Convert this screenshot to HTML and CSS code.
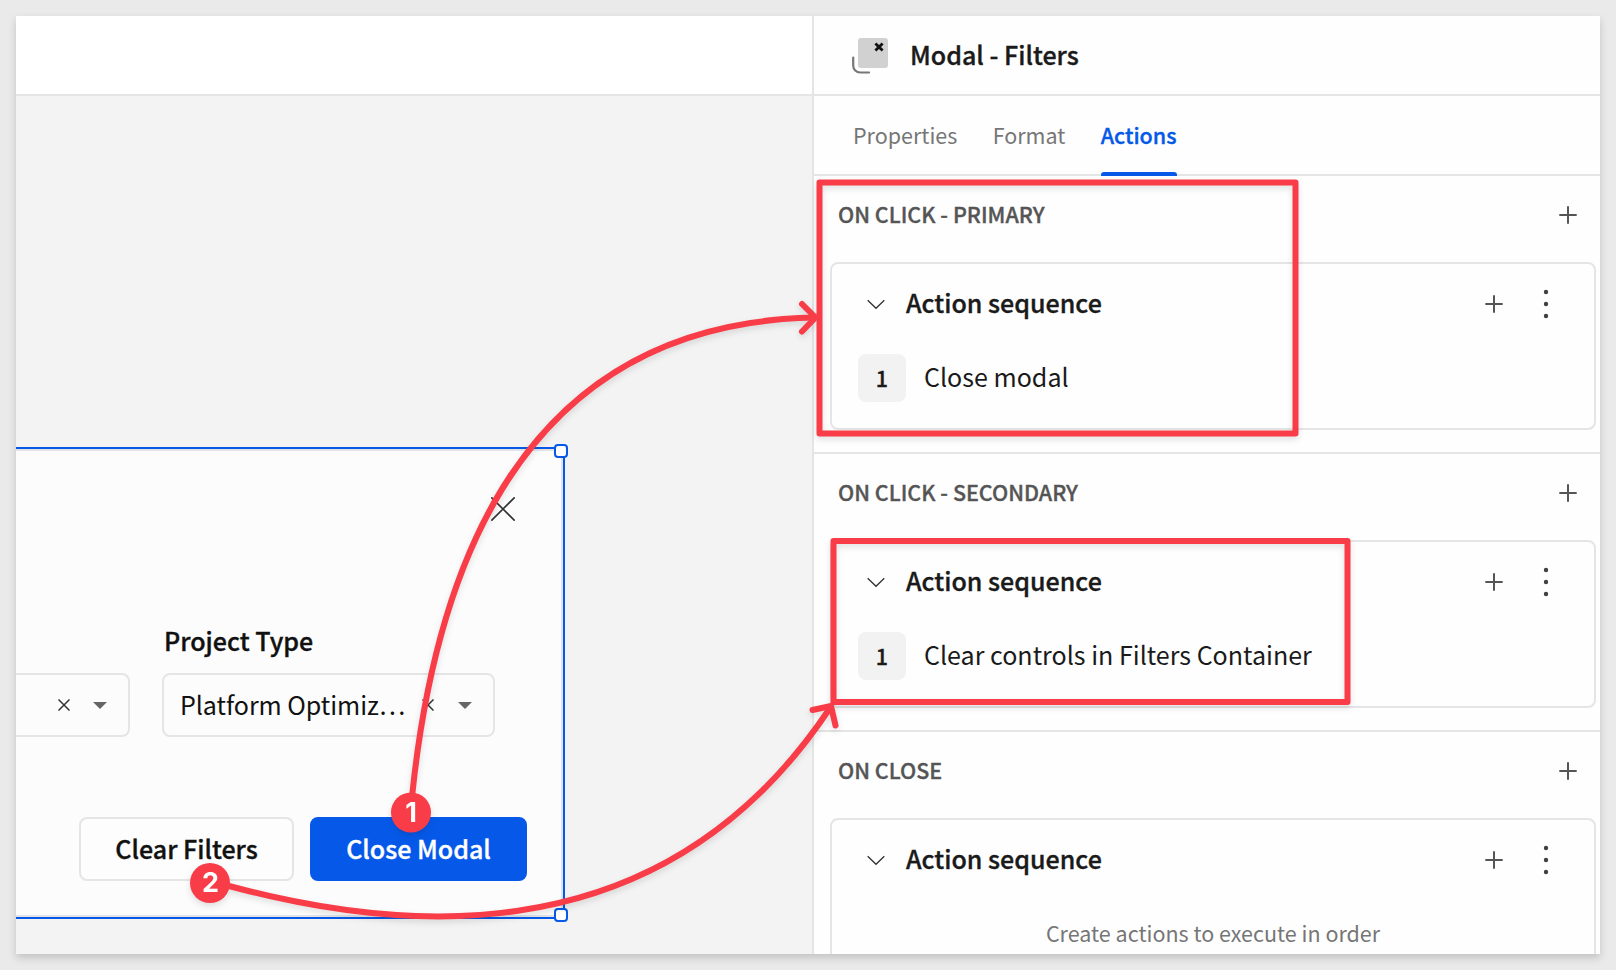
FILE: index.html
```html
<!DOCTYPE html>
<html lang="en">
<head>
<meta charset="utf-8">
<title>Modal - Filters</title>
<link rel="stylesheet" href="styles.css">
</head>
<body>
<svg class="sprite" width="0" height="0">
  <symbol id="plus" viewBox="0 0 18 18"><path d="M9 .3v17.4M.3 9h17.4" stroke="#555" stroke-width="2" fill="none"/></symbol>
  <symbol id="chevron" viewBox="0 0 18 12"><path d="M.7 2.200 9 10.300l8.300-8.100" stroke="#333" stroke-width="1.3" fill="none"/></symbol>
  <symbol id="dots" viewBox="0 0 6 30"><g fill="#404040"><circle cx="3" cy="3" r="2.2"/><circle cx="3" cy="15" r="2.2"/><circle cx="3" cy="27" r="2.2"/></g></symbol>
  <symbol id="clear" viewBox="0 0 12 12"><path d="M.5.5l11 11M11.5.5l-11 11" stroke="#333" stroke-width="1.5" fill="none"/></symbol>
  <symbol id="caret" viewBox="0 0 14 7"><path d="M0 0h14L7 7z" fill="#666"/></symbol>
</svg>
<div class="window">
  <main class="stage">
    <div class="topbar"></div>
    <div class="canvas">
      <section class="modal">
        <div class="modal-head"><svg class="close" viewBox="0 0 24 24"><path d="M.3.3l23.4 23.4M23.7.3.3 23.7" stroke="#333" stroke-width="1.6" fill="none"/></svg></div>
        <div class="fields">
          <div class="select select-cut"><svg class="i-clear"><use href="#clear"/></svg><svg class="i-caret"><use href="#caret"/></svg></div>
          <div class="field">
            <div class="label"><span>Project Type</span></div>
            <div class="select"><span class="value">Platform Optimiz…</span><svg class="i-clear"><use href="#clear"/></svg><svg class="i-caret"><use href="#caret"/></svg></div>
          </div>
        </div>
        <div class="buttons">
          <button class="btn btn-clear">Clear Filters</button>
          <button class="btn btn-primary">Close Modal</button>
        </div>
        <i class="handle handle-top"></i>
        <i class="handle handle-bottom"></i>
      </section>
    </div>
  </main>
  <aside class="panel">
    <header class="panel-head">
      <svg class="modal-icon" viewBox="0 0 36 36"><rect x="6" y="0" width="30" height="30" rx="3" fill="#d1d1d1"/><path d="M23.400 5.400l7.200 7.200M30.600 5.400l-7.200 7.200" stroke="#111" stroke-width="2.8"/><path d="M1.200 19.500v8a7 7 0 0 0 7 7H17" stroke="#777" stroke-width="2.200" stroke-linecap="round" fill="none"/></svg>
      <h1 class="title">Modal - Filters</h1>
    </header>
    <nav class="tabs">
      <span class="tab">Properties</span>
      <span class="tab">Format</span>
      <span class="tab tab-active">Actions</span>
    </nav>
    <section class="group">
      <div class="group-head"><span>ON CLICK - PRIMARY</span><svg class="i-plus"><use href="#plus"/></svg></div>
      <div class="card">
        <div class="card-head"><svg class="i-chevron"><use href="#chevron"/></svg><h2>Action sequence</h2><svg class="i-plus"><use href="#plus"/></svg><svg class="i-dots"><use href="#dots"/></svg></div>
        <div class="step"><b class="num">1</b><span>Close modal</span></div>
      </div>
    </section>
    <section class="group">
      <div class="group-head"><span>ON CLICK - SECONDARY</span><svg class="i-plus"><use href="#plus"/></svg></div>
      <div class="card">
        <div class="card-head"><svg class="i-chevron"><use href="#chevron"/></svg><h2>Action sequence</h2><svg class="i-plus"><use href="#plus"/></svg><svg class="i-dots"><use href="#dots"/></svg></div>
        <div class="step"><b class="num">1</b><span>Clear controls in Filters Container</span></div>
      </div>
    </section>
    <section class="group">
      <div class="group-head"><span>ON CLOSE</span><svg class="i-plus"><use href="#plus"/></svg></div>
      <div class="card">
        <div class="card-head"><svg class="i-chevron"><use href="#chevron"/></svg><h2>Action sequence</h2><svg class="i-plus"><use href="#plus"/></svg><svg class="i-dots"><use href="#dots"/></svg></div>
        <div class="empty">Create actions to execute in order</div>
      </div>
    </section>
  </aside>
</div>
<svg class="notes" viewBox="0 0 1616 970">
  <g class="lines">
    <rect x="819.5" y="182.500" width="476" height="251"/>
    <rect x="833.5" y="541" width="514" height="161"/>
    <path d="M412 797Q460 324 815 317.500"/>
    <path d="M802 304l13.500 13.500L802 331.500" stroke-linecap="round"/>
    <path d="M229 886Q638 996 830 708"/>
    <path d="M812.500 710l18.500-4 4.500 19.500" stroke-linecap="round"/>
  </g>
  <g class="pins">
    <circle cx="411" cy="812.500" r="20"/><text x="411" y="822">1</text>
    <circle cx="210" cy="883" r="20"/><text x="210.500" y="892">2</text>
  </g>
</svg>
</body>
</html>
```
FILE: styles.css
```css
* { box-sizing: border-box; }
body {
  margin: 0;
  width: 1616px;
  height: 970px;
  padding: 16px;
  overflow: hidden;
  background: #eaeaea;
  color: #1a1a1a;
  font-family: "Noto Sans CJK SC", "Noto Sans", sans-serif;
  font-size: 25.05px;
  line-height: 36px;
}
svg { display: block; flex: none; }
.sprite { position: absolute; }
h1, h2 { margin: 0; font-size: inherit; font-weight: 500; }
span, h1, h2 { white-space: nowrap; }
h1, h2, .label, .btn, .tab-active, .group-head span, .num { -webkit-text-stroke: .35px currentColor; }

.window {
  display: flex;
  height: 938px;
  overflow: hidden;
  background: #fefefe;
  box-shadow: 0 4px 8px rgba(0, 0, 0, .17);
}
.stage { width: 796px; display: flex; flex-direction: column; }
.topbar { height: 80px; background: #fff; border-bottom: 2px solid #e5e5e5; }
.canvas { flex: 1; padding-top: 351px; background: #f3f3f3; }

.modal {
  position: relative;
  width: 549px;
  height: 472px;
  background: #fcfcfc;
  border: 2px solid #0659e8;
  border-left: 0;
  box-shadow: inset -2px 2px 0 #e1e3e6, inset 0 -2px 0 #e1e3e6;
}
.modal-head { display: flex; justify-content: flex-end; padding: 48px 48px 0 0; }
.close { width: 24px; height: 24px; }
.fields { display: flex; align-items: flex-end; gap: 32px; margin-top: 101px; }
.label { height: 51px; padding-left: 2px; color: #111; font-weight: 500; }
.select {
  display: flex;
  align-items: center;
  width: 333px;
  height: 64px;
  padding: 0 21px 0 16px;
  border: 2px solid #e5e5e5;
  border-radius: 8px;
  color: #111;
}
.select-cut { width: 114px; padding: 0 22px 0 42px; border-left: 0; border-radius: 0 8px 8px 0; }
.value { width: 243px; padding-bottom: 2px; letter-spacing: -.05px; }
.i-clear { width: 12px; height: 12px; }
.i-caret { width: 14px; height: 7px; margin-left: 23px; }
.value ~ .i-caret { margin-left: 24px; }
.buttons { display: flex; gap: 16px; margin: 80px 0 0 63px; }
.btn {
  height: 64px;
  padding: 0 0 2px;
  border: 2px solid #e5e5e5;
  border-radius: 8px;
  background: #fdfdfd;
  color: #111;
  font: 500 25.05px/36px "Noto Sans CJK SC", "Noto Sans", sans-serif;
}
.btn-clear { width: 215px; }
.btn-primary { width: 217px; background: #0659e8; border-color: #0659e8; color: #fff; }
.handle {
  position: absolute;
  left: 538px;
  width: 14px;
  height: 14px;
  border: 2px solid #0659e8;
  border-radius: 4px;
  background: #fff;
}
.handle-top { top: -5px; }
.handle-bottom { bottom: -5px; }

.panel { width: 788px; border-left: 2px solid #e5e5e5; }
.panel-head {
  display: flex;
  align-items: center;
  gap: 22px;
  height: 80px;
  padding-left: 38px;
  border-bottom: 2px solid #e5e5e5;
}
.title { padding-bottom: 2px; }
.modal-icon { width: 36px; height: 36px; margin-top: 2px; }
.tabs {
  display: flex;
  gap: 35.3px;
  height: 80px;
  padding-left: 39px;
  border-bottom: 2px solid #e5e5e5;
  color: #767676;
  font-size: 21.5px;
  line-height: 78px;
}
.tab { position: relative; height: 78px; }
.tab-active { color: #0659e8; font-weight: 500; }
.tab-active::after {
  content: "";
  position: absolute;
  left: 0;
  right: 0;
  bottom: -2px;
  height: 4px;
  border-radius: 3px 3px 0 0;
  background: #0659e8;
}
.group { height: 278px; padding: 0 4px 0 16px; border-bottom: 2px solid #e5e5e5; }
.group-head {
  display: flex;
  align-items: center;
  justify-content: space-between;
  height: 78px;
  padding: 0 19px 0 8px;
  color: #555;
  font-size: 21.5px;
  font-weight: 500;
}
.group-head span { padding-bottom: 2px; }
.i-plus { width: 18px; height: 18px; }
.card { height: 168px; margin-top: 8px; border: 2px solid #e5e5e5; border-radius: 8px; }
.card-head { display: flex; align-items: center; height: 80px; padding: 0 45px 0 35px; }
.card-head h2 { flex: 1; padding: 0 0 4px 21px; }
.i-chevron { width: 18px; height: 12px; }
.i-dots { width: 6px; height: 30px; margin-left: 40px; }
.step { display: flex; align-items: center; gap: 18px; padding: 10px 0 0 26px; }
.step span { padding-bottom: 4px; }
.num {
  width: 48px;
  height: 48px;
  border-radius: 8px;
  background: #f2f2f2;
  font-size: 21.5px;
  font-weight: 500;
  line-height: 48px;
  text-align: center;
}
.empty { padding-top: 15px; color: #767676; font-size: 21.5px; text-align: center; }

/* Callouts drawn over the interface */
.notes { position: absolute; left: 0; top: 0; width: 1616px; height: 970px; filter: drop-shadow(0 3px 3px rgba(0, 0, 0, .12)); }
.lines { fill: none; stroke: #f83c48; stroke-width: 6; stroke-linejoin: round; }
.pins { fill: #f83c48; }
.pins text { fill: #fff; font: 700 27px Inter, sans-serif; text-anchor: middle; }
```
